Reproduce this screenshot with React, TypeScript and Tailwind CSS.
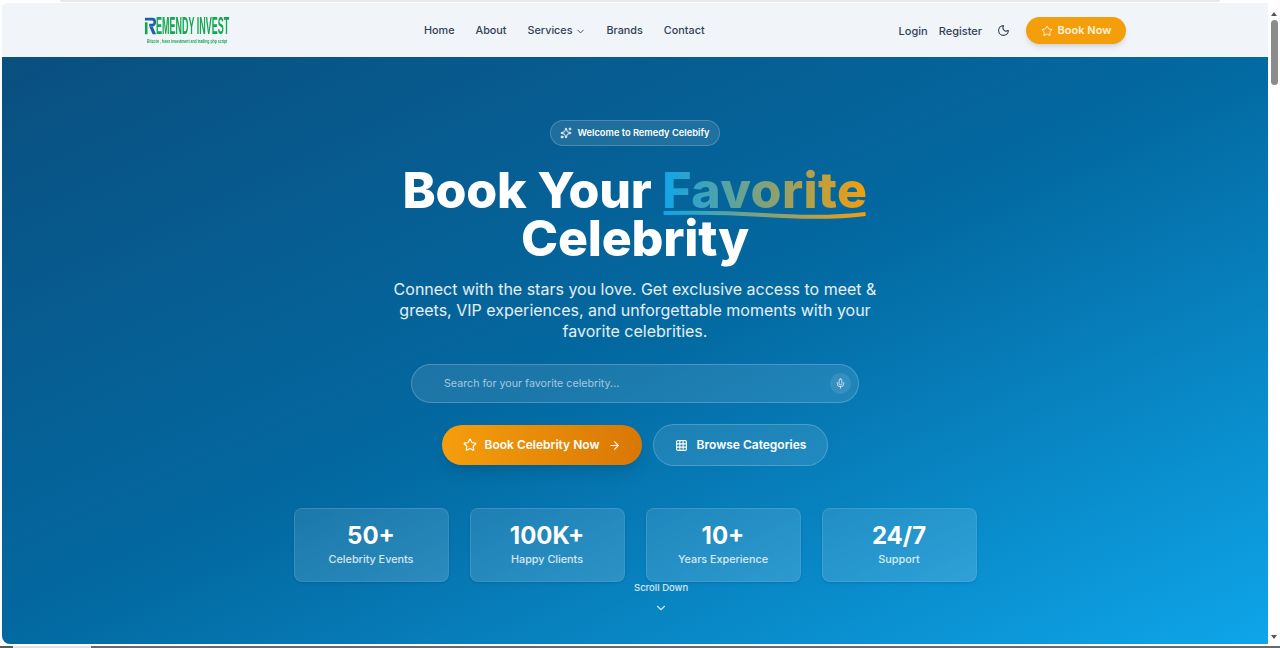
import { ArrowRight, ChevronDown, Grid3x3, Mic, Moon, Sparkles, Star } from 'lucide-react';

const links = ['Home', 'About', 'Services', 'Brands', 'Contact'];

const stats = [
  { value: '50+', label: 'Celebrity Events' },
  { value: '100K+', label: 'Happy Clients' },
  { value: '10+', label: 'Years Experience' },
  { value: '24/7', label: 'Support' },
];

function Logo() {
  return (
    <div className="flex w-[86px] flex-col items-start pt-[1px]">
      <div className="flex h-[17px] items-center">
        <svg width="13" height="18" viewBox="0 0 13 21" className="shrink-0">
          <path d="M0 1h9c3 0 4 2 4 5s-2 5-4 5H5v-3h3c1 0 2-.5 2-2s-1-2-2-2H0z" fill="#1d5fa8" />
          <path d="M0 6h3v14H0z" fill="#16a34a" />
          <path d="M5 11h4l4 9H9z" fill="#1d5fa8" />
        </svg>
        <span className="ml-[-1px] origin-left scale-x-[0.39] whitespace-nowrap font-['Liberation_Sans',sans-serif] text-[23px] leading-none font-bold text-[#12a84f]">
          EMENDY INVEST
        </span>
      </div>
      <span className="mt-[3px] ml-[3px] origin-left scale-x-[0.58] whitespace-nowrap font-['Liberation_Sans',sans-serif] text-[6px] leading-none font-bold text-[#12a84f]">
        Bitcoin , forex investment and trading php script
      </span>
    </div>
  );
}

function Header() {
  return (
    <header className="flex h-[54px] shrink-0 items-center bg-[#f1f5f9] pr-[142px] pl-[142px] font-['Inter',sans-serif]">
      <Logo />
      <nav className="ml-[194px] flex items-center gap-[21px] pt-[3px] text-[10.8px] font-medium text-[#334155]">
        {links.map((link) => (
          <a key={link} className="flex items-center gap-[2px]">
            {link}
            {link === 'Services' && <ChevronDown size={11} />}
          </a>
        ))}
      </nav>
      <div className="ml-auto flex items-center text-[11px] font-medium text-[#334155]">
        <a className="pt-[2px]">Login</a>
        <a className="ml-[11px] pt-[2px]">Register</a>
        <Moon size={13} className="ml-[15px] mt-[1px]" />
        <button className="ml-[16px] flex h-[27px] w-[100px] items-center justify-center gap-[5px] rounded-full bg-[#f59e0b] pt-[1px] text-[11px] font-semibold text-[#fff3dc] shadow-md">
          <Star size={12} />
          Book Now
        </button>
      </div>
    </header>
  );
}

function Hero() {
  return (
    <section className="relative flex flex-1 flex-col items-center overflow-hidden rounded-bl-lg bg-linear-to-br/srgb from-[#0a4f80] via-[#0369a1] to-[#0ea5e9] pt-[63px] font-['Inter',sans-serif] text-white">
      <div className="flex h-[26px] w-[170px] items-center justify-center gap-[5px] rounded-full border border-white/20 bg-white/10 text-[9.3px] font-semibold">
        <Sparkles size={12} />
        Welcome to Remedy Celebify
      </div>

      <h1 className="mt-[20px] w-[500px] text-center text-[50px] leading-[48px] font-extrabold tracking-[-0.2px]">
        Book Your{' '}
        <span className="relative inline-block bg-linear-to-r/srgb from-[#0ea5e9] to-[#f59e0b] bg-clip-text tracking-[0.4px] text-transparent">
          Favorite
          <svg viewBox="0 0 204 10" className="absolute top-[44px] left-0 h-[10px] w-full" fill="none">
            <defs>
              <linearGradient id="wave">
                <stop offset="0" stopColor="#0ea5e9" />
                <stop offset="1" stopColor="#f59e0b" />
              </linearGradient>
            </defs>
            <path d="M1 3c40-1 70 0 100 2s70 3 102-1" stroke="url(#wave)" strokeWidth="4" />
          </svg>
        </span>{' '}
        Celebrity
      </h1>

      <p className="mt-[17px] w-[500px] text-center text-[16px] leading-[21px] text-white/90">
        Connect with the stars you love. Get exclusive access to meet &amp; greets, VIP experiences, and unforgettable
        moments with your favorite celebrities.
      </p>

      <div className="mt-[22px] flex h-[39px] w-[448px] items-center justify-between rounded-full border border-white/20 bg-white/10 pr-[7px] pl-[32px]">
        <span className="pt-[1px] text-[10.7px] text-white/60">Search for your favorite celebrity...</span>
        <span className="flex h-[21px] w-[21px] items-center justify-center rounded-full bg-white/10">
          <Mic size={11} className="text-white/80" />
        </span>
      </div>

      <div className="mt-[21px] flex items-center gap-[11px]">
        <button className="flex h-[40px] w-[200px] items-center justify-center gap-[8px] rounded-full bg-linear-to-r/srgb from-[#f59e0b] to-[#d97706] text-[12px] font-semibold shadow-lg">
          <Star size={14} />
          Book Celebrity Now
          <ArrowRight size={13} className="ml-[1px]" />
        </button>
        <button className="flex h-[42px] w-[175px] items-center justify-center gap-[9px] rounded-full border border-white/20 bg-white/10 text-[12px] font-semibold">
          <Grid3x3 size={13} />
          Browse Categories
        </button>
      </div>

      <div className="mt-[42px] flex gap-[21px]">
        {stats.map((stat) => (
          <div
            key={stat.label}
            className="flex h-[74px] w-[155px] flex-col items-center rounded-lg border border-white/10 bg-linear-to-br/srgb from-white/10 to-white/15 pt-[12px] shadow-sm"
          >
            <span className="text-[24px] leading-[30px] font-bold">{stat.value}</span>
            <span className="mt-[1px] text-[10.8px] leading-[16px] font-medium text-white/80">{stat.label}</span>
          </div>
        ))}
      </div>

      <div className="absolute top-[525px] left-[632px] flex flex-col items-center text-[9.5px] leading-[12px] font-medium text-white/80">
        Scroll Down
        <ChevronDown size={14} className="mt-[7px]" />
      </div>
    </section>
  );
}

function Scrollbar() {
  return (
    <div className="flex w-[12px] shrink-0 flex-col items-center bg-white">
      <span className="mt-[9px] h-0 w-0 border-x-[3px] border-b-[4px] border-x-transparent border-b-[#555]" />
      <span className="mt-[4px] h-[65px] w-[7px] rounded-full bg-[#8c8c8c]" />
      <span className="mt-auto mb-[5px] h-0 w-0 border-x-[3px] border-t-[4px] border-x-transparent border-t-[#555]" />
    </div>
  );
}

export default function App() {
  return (
    <div className="flex h-[648px] w-[1280px] flex-col overflow-hidden bg-white">
      <div className="h-[3px] shrink-0">
        <div className="mx-[60px] h-[2px] rounded-b bg-[#e9e9ea]" />
      </div>
      <div className="flex min-h-0 flex-1 overflow-hidden rounded-t-lg pl-[2px]">
        <div className="flex min-w-0 flex-1 flex-col">
          <Header />
          <Hero />
        </div>
        <Scrollbar />
      </div>
      <div className="mt-[2px] flex h-[2px] shrink-0">
        <span className="w-[13px] bg-[#55585c]" />
        <span className="w-[78px] bg-[#dfe3e6]" />
        <span className="flex-1 bg-[#66696e]" />
      </div>
    </div>
  );
}
